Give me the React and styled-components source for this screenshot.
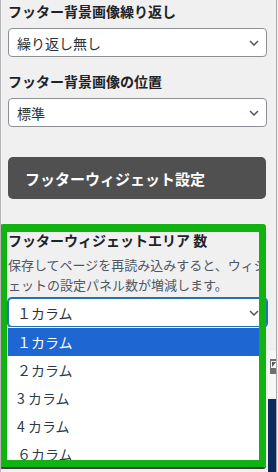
import React from "react";
import styled, { createGlobalStyle } from "styled-components";

const GlobalStyle = createGlobalStyle`
  body {
    margin: 0;
    background: #f0f0f1;
    font-family: "Noto Sans CJK JP", "Noto Sans", sans-serif;
  }
`;

const Chevron = () => (
  <svg width="10" height="6" viewBox="0 0 10 6" fill="none">
    <polyline points="1,1 5,5 9,1" stroke="#50575e" strokeWidth="1.5" />
  </svg>
);

const options = ["１カラム", "２カラム", "3 カラム", "4 カラム", "６カラム"];

const App = () => {
  return (
    <>
      <GlobalStyle />
      <Panel>
        <Field>
          <Label>フッター背景画像繰り返し</Label>
          <SelectBox>
            <span>繰り返し無し</span>
            <Chevron />
          </SelectBox>
        </Field>
        <Field>
          <Label>フッター背景画像の位置</Label>
          <SelectBox>
            <span>標準</span>
            <Chevron />
          </SelectBox>
        </Field>

        <SectionButton>フッターウィジェット設定</SectionButton>

        <Section>
          <SectionLabel>フッターウィジェットエリア 数</SectionLabel>
          <Desc>保存してページを再読み込みすると、ウィジェットの設定パネル数が増減します。</Desc>
          <SelectBox $focused>
            <span>１カラム</span>
            <Chevron />
            <Dropdown>
              {options.map((o, i) => (
                <Option key={o} $active={i === 0}>
                  {o}
                </Option>
              ))}
            </Dropdown>
          </SelectBox>
          <PreviewRow>
            <Strip>
              <svg width="7" height="15" viewBox="0 0 7 15">
                <rect x="0" y="0" width="7" height="15" fill="#6e6e6e" />
                <rect x="1" y="2" width="6" height="7" fill="#f4f4f4" />
                <polygon points="2,3 6,3 2,8" fill="#555" />
              </svg>
            </Strip>
          </PreviewRow>
          <ImageRow>
            <NavyStrip />
          </ImageRow>
          <Highlight />
        </Section>
      </Panel>
    </>
  );
};

const Panel = styled.div`
  width: 277px;
  height: 472px;
  box-sizing: border-box;
  border-left: 1px solid #b4b6b9;
  border-right: 1px solid #a7aaad;
  padding: 1px 9px 0 7px;
  overflow: hidden;
  background: #f0f0f1;
`;

const Field = styled.div`
  & + & {
    margin-top: 14px;
  }
`;

const Label = styled.div`
  font-size: 14px;
  font-weight: 700;
  line-height: 20px;
  color: #1d2327;
  margin-bottom: 7px;
`;

const SelectBox = styled.div`
  position: relative;
  height: 29px;
  box-sizing: border-box;
  border: 1px solid ${(p) => (p.$focused ? "#2271b1" : "#8c8f94")};
  box-shadow: ${(p) => (p.$focused ? "0 0 0 1px #2271b1" : "none")};
  border-radius: 4px;
  background: #fff;
  display: flex;
  align-items: center;
  justify-content: space-between;
  padding: 0 7px 0 8px;
  font-size: 14px;
  color: #2c3338;
  z-index: ${(p) => (p.$focused ? 2 : "auto")};
`;

const SectionButton = styled.div`
  margin: 30px 1px 0 0;
  height: 42px;
  background: #505050;
  border-radius: 5px;
  color: #fff;
  font-size: 15px;
  font-weight: 700;
  padding-left: 17px;
  display: flex;
  align-items: center;
`;

const Section = styled.div`
  position: relative;
  margin-top: 31px;
`;

const SectionLabel = styled(Label)`
  margin-bottom: 5px;
`;

const Desc = styled.p`
  margin: 0 -4px 3px 0;
  font-size: 13px;
  line-height: 20px;
  color: #50575e;
  line-break: anywhere;
`;

const Dropdown = styled.div`
  position: absolute;
  top: calc(100% + 1px);
  left: -1px;
  width: 258px;
  padding-top: 1px;
  background: #fff;
`;

const Option = styled.div`
  height: 28px;
  line-height: 28px;
  padding-left: 9px;
  font-size: 14px;
  color: ${(p) => (p.$active ? "#fff" : "#2c3a4a")};
  background: ${(p) => (p.$active ? "#1e66d2" : "transparent")};
`;

const PreviewRow = styled.div`
  margin: 24px -10px 0 0;
  display: flex;
  justify-content: flex-end;
`;

const Strip = styled.div`
  width: 9px;
  height: 46px;
  background: #f6f7f7;
  display: flex;
  justify-content: flex-end;
  padding-top: 8px;
  box-sizing: border-box;
`;

const ImageRow = styled.div`
  margin: 2px -10px 0 0;
  display: flex;
  justify-content: flex-end;
`;

const NavyStrip = styled.div`
  width: 9px;
  height: 80px;
  background: #0c2a5c;
`;

const Highlight = styled.div`
  position: absolute;
  left: -8px;
  top: -6px;
  width: 266px;
  height: 243px;
  box-sizing: border-box;
  border: 7px solid #10b310;
  border-top-width: 8px;
  border-radius: 3px;
  box-shadow: 0 2px 0 #3f3f3f;
  pointer-events: none;
  z-index: 5;
`;

export default App;
